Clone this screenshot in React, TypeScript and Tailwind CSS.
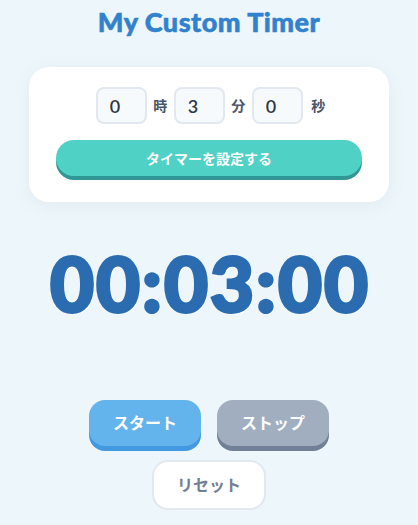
import React from "react";

export default function App() {
  const font = { fontFamily: '"Lato", "Noto Sans CJK JP", sans-serif' };
  return (
    <div
      className="w-[418px] h-[525px] bg-[#edf6fa] flex flex-col items-center overflow-hidden"
      style={font}
    >
      <h1 className="mt-[6px] h-[32px] leading-[32px] text-[27px] font-black text-[#3182ce] tracking-[0.5px] [-webkit-text-stroke:0.6px_#3182ce]">
        My Custom Timer
      </h1>
      <div className="mt-[29px] w-[360px] h-[135px] bg-white rounded-[20px] shadow-[0_4px_20px_rgba(0,0,0,0.05)] px-[27px] pt-[20px] flex flex-col items-center">
        <div className="flex items-center gap-[6.5px] h-[37px] pl-[3px]">
          <input
            readOnly
            value="0"
            className="w-[51px] h-[37px] rounded-[8px] border-2 border-[#e2e8f0] bg-[#f7fafc] pl-[12px] text-[18px] font-semibold text-[#2d3748] outline-none"
          />
          <span className="text-[14px] font-bold text-[#4a5568]">時</span>
          <input
            readOnly
            value="3"
            className="w-[51px] h-[37px] rounded-[8px] border-2 border-[#e2e8f0] bg-[#f7fafc] pl-[12px] text-[18px] font-semibold text-[#2d3748] outline-none"
          />
          <span className="text-[14px] font-bold text-[#4a5568]">分</span>
          <input
            readOnly
            value="0"
            className="w-[51px] h-[37px] rounded-[8px] border-2 border-[#e2e8f0] bg-[#f7fafc] pl-[12px] text-[18px] font-semibold text-[#2d3748] outline-none"
          />
          <span className="ml-[2px] text-[14px] font-bold text-[#4a5568]">秒</span>
        </div>
        <button className="mt-[16px] w-[306px] h-[36px] rounded-full bg-[#4fd1c5] shadow-[0_4px_0_#319795] text-white text-[14px] font-bold">
          タイマーを設定する
        </button>
      </div>
      <div className="mt-[36px] h-[90px] flex items-center text-[76px] font-black text-[#2b6cb0] leading-none [text-shadow:2px_2px_0_#ffffff] [-webkit-text-stroke:3px_#2b6cb0] tracking-[2px] pl-[2px]">
        00:03:00
      </div>
      <div className="mt-[72px] flex gap-[16px]">
        <button className="w-[112px] h-[46px] rounded-[16px] bg-[#63b3ed] shadow-[0_5px_0_#4299e1] text-white text-[16px] font-bold">
          スタート
        </button>
        <button className="w-[112px] h-[46px] rounded-[16px] bg-[#a0aec0] shadow-[0_5px_0_#718096] text-white text-[16px] font-bold">
          ストップ
        </button>
      </div>
      <button className="mt-[14px] w-[114px] h-[50px] rounded-[16px] bg-white border-2 border-[#e2e8f0] text-[#718096] text-[16px] font-bold">
        リセット
      </button>
    </div>
  );
}
